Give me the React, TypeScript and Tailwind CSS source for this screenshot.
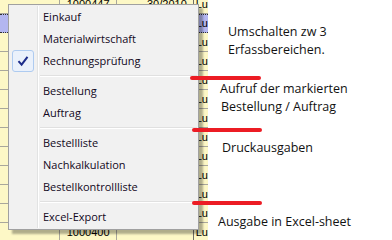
import React from 'react';

type Item = { label: string; checked?: boolean } | 'sep';

const items: Item[] = [
  { label: 'Einkauf' },
  { label: 'Materialwirtschaft' },
  { label: 'Rechnungsprüfung', checked: true },
  'sep',
  { label: 'Bestellung' },
  { label: 'Auftrag' },
  'sep',
  { label: 'Bestellliste' },
  { label: 'Nachkalkulation' },
  { label: 'Bestellkontrollliste' },
  'sep',
  { label: 'Excel-Export' },
];

const rows = Array.from({ length: 13 }, (_, i) => i);

function MenuRow({ item }: { item: Item }) {
  if (item === 'sep') {
    return (
      <div className="flex h-[8px] shrink-0">
        <div className="w-[29px] border-r border-[#e2e3e3]" />
        <div className="flex flex-1 items-center border-l border-white pl-[1px] pr-[1px]">
          <div className="h-[2px] w-full border-t border-b border-t-[#e0e0e0] border-b-white" />
        </div>
      </div>
    );
  }
  return (
    <div className="flex h-[22px] shrink-0">
      <div className="flex w-[29px] items-center border-r border-[#e2e3e3]">
        {item.checked && (
          <div className="ml-[3px] flex h-[22px] w-[22px] items-center justify-center rounded-[3px] border border-[#aecbf0] bg-[#eaf1fb]">
            <svg width="14" height="14" viewBox="0 0 14 14">
              <path d="M2.5 7.2 L5.6 10.6 L11.5 2.8" fill="none" stroke="#1c2c8a" strokeWidth="2" />
            </svg>
          </div>
        )}
      </div>
      <div className="flex flex-1 items-center border-l border-white pl-[4px]">{item.label}</div>
    </div>
  );
}

export default function App() {
  return (
    <div className="relative flex h-[240px] w-[392px] overflow-hidden bg-white">
      {/* spreadsheet behind the menu */}
      <div className="flex h-full w-[208px] flex-col overflow-hidden bg-[#fdf8c6] font-['Liberation_Sans',sans-serif] text-[11px] text-black">
        <div className="-mt-[5px] flex flex-col">
          {rows.map((i) => (
            <div
              key={i}
              className={
                i === 1
                  ? 'flex h-[19px] shrink-0 border-y border-dotted border-[#303030] bg-[#b3b6f0]'
                  : 'flex h-[19px] shrink-0 border-b border-[#a9a79c]'
              }
            >
              <div className="w-[62px] border-r border-[#a9a79c]" />
              <div className="flex w-[60px] items-center justify-center border-r border-[#a9a79c]">
                {i === 0 ? '1000447' : i === 12 ? '1000400' : ''}
              </div>
              <div className="flex w-[78px] items-center justify-end pr-[6px]">
                {i === 0 ? '30/2010' : ''}
              </div>
              <div className="flex flex-1 items-center border-l border-[#6e6d66] pl-[2px]">Lu</div>
            </div>
          ))}
        </div>
      </div>

      {/* annotations */}
      <div className="flex flex-1 flex-col pt-[23px] font-['Open_Sans',sans-serif] text-[12.5px] leading-[18px] text-[#121212]">
        <div className="ml-[20px]">
          <div>Umschalten zw 3</div>
          <div>Erfassbereichen.</div>
        </div>
        <div className="ml-[12px] mt-[21px]">
          <div>Aufruf der markierten</div>
          <div className="ml-[1px]">Bestellung / Auftrag</div>
        </div>
        <div className="ml-[14px] mt-[23px]">Druckausgaben</div>
        <div className="ml-[10px] mt-[56px]">Ausgabe in Excel-sheet</div>
      </div>

      {/* context menu */}
      <div className="absolute left-[8px] top-[4px] flex h-[226px] w-[191px] flex-col border border-[#a0a0a0] bg-[#f1f1f1] pt-[1px] font-['Open_Sans',sans-serif] text-[11px] text-[#12081c] shadow-[4px_4px_2px_rgba(0,0,0,0.3)]">
        {items.map((it, idx) => (
          <MenuRow key={idx} item={it} />
        ))}
      </div>

      {/* red markers */}
      <div className="absolute left-[190px] top-[76px] h-[4px] w-[71px] rounded-full bg-[#ec1c24]" />
      <div className="absolute left-[192px] top-[128px] h-[4px] w-[70px] rounded-full bg-[#ec1c24]" />
      <div className="absolute left-[192px] top-[201px] h-[4px] w-[70px] rounded-full bg-[#ec1c24]" />
    </div>
  );
}
